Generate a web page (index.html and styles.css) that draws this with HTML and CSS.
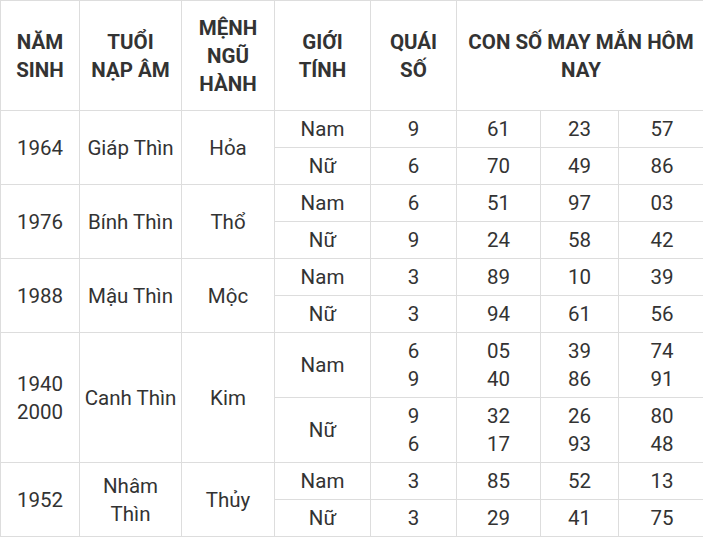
FILE: index.html
```html
<!DOCTYPE html>
<html lang="vi">
<head>
<meta charset="utf-8">
<link rel="stylesheet" href="styles.css">
</head>
<body>
<table class="lucky">
  <colgroup>
    <col class="c1"><col class="c2"><col class="c3"><col class="c4"><col class="c5"><col class="c6"><col class="c7"><col class="c8">
  </colgroup>
  <thead>
    <tr>
      <th>NĂM SINH</th>
      <th>TUỔI NẠP ÂM</th>
      <th>MỆNH NGŨ HÀNH</th>
      <th>GIỚI TÍNH</th>
      <th>QUÁI SỐ</th>
      <th colspan="3">CON SỐ MAY MẮN HÔM NAY</th>
    </tr>
  </thead>
  <tbody>
    <tr><td rowspan="2">1964</td><td rowspan="2">Giáp Thìn</td><td rowspan="2">Hỏa</td><td>Nam</td><td>9</td><td>61</td><td>23</td><td>57</td></tr>
    <tr><td>Nữ</td><td>6</td><td>70</td><td>49</td><td>86</td></tr>
    <tr><td rowspan="2">1976</td><td rowspan="2">Bính Thìn</td><td rowspan="2">Thổ</td><td>Nam</td><td>6</td><td>51</td><td>97</td><td>03</td></tr>
    <tr><td>Nữ</td><td>9</td><td>24</td><td>58</td><td>42</td></tr>
    <tr><td rowspan="2">1988</td><td rowspan="2">Mậu Thìn</td><td rowspan="2">Mộc</td><td>Nam</td><td>3</td><td>89</td><td>10</td><td>39</td></tr>
    <tr><td>Nữ</td><td>3</td><td>94</td><td>61</td><td>56</td></tr>
    <tr><td rowspan="2">1940<br>2000</td><td rowspan="2">Canh Thìn</td><td rowspan="2">Kim</td><td>Nam</td><td>6<br>9</td><td>05<br>40</td><td>39<br>86</td><td>74<br>91</td></tr>
    <tr><td>Nữ</td><td>9<br>6</td><td>32<br>17</td><td>26<br>93</td><td>80<br>48</td></tr>
    <tr><td rowspan="2">1952</td><td rowspan="2">Nhâm Thìn</td><td rowspan="2">Thủy</td><td>Nam</td><td>3</td><td>85</td><td>52</td><td>13</td></tr>
    <tr><td>Nữ</td><td>3</td><td>29</td><td>41</td><td>75</td></tr>
  </tbody>
</table>
</body>
</html>
```

FILE: styles.css
```css
html, body {
  margin: 0;
  padding: 0;
  background: #ffffff;
  overflow: hidden;
}

.lucky {
  border-collapse: collapse;
  table-layout: fixed;
  width: 705px;
  font-family: Roboto, "Liberation Sans", Arial, sans-serif;
  font-size: 20.5px;
  line-height: 28px;
  color: #333333;
}

.c1 { width: 79px; }
.c2 { width: 102px; }
.c3 { width: 93px; }
.c4 { width: 96px; }
.c5 { width: 86px; }
.c6 { width: 84px; }
.c7 { width: 78px; }
.c8 { width: 87px; }

.lucky th,
.lucky td {
  border: 1px solid #dddddd;
  text-align: center;
  vertical-align: middle;
}

.lucky th {
  font-weight: 700;
  padding: 13px 8px 12px;
}

.lucky td {
  font-weight: 400;
  padding: 4px;
}
```
